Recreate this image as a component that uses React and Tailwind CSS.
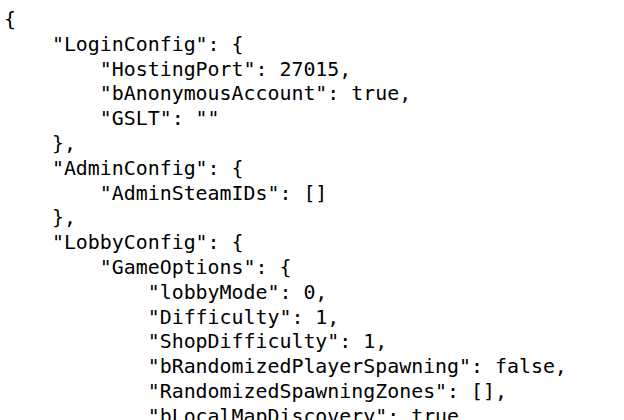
import React from "react";

const lines = [
  "{",
  '    "LoginConfig": {',
  '        "HostingPort": 27015,',
  '        "bAnonymousAccount": true,',
  '        "GSLT": ""',
  "    },",
  '    "AdminConfig": {',
  '        "AdminSteamIDs": []',
  "    },",
  '    "LobbyConfig": {',
  '        "GameOptions": {',
  '            "lobbyMode": 0,',
  '            "Difficulty": 1,',
  '            "ShopDifficulty": 1,',
  '            "bRandomizedPlayerSpawning": false,',
  '            "RandomizedSpawningZones": [],',
  '            "bLocalMapDiscovery": true,',
];

export default function App() {
  return (
    <div className="w-[624px] h-[420px] overflow-hidden bg-white">
      <pre className="pl-[4px] pt-[8px] font-['DejaVu_Sans_Mono',monospace] text-[19.9px] leading-[24.8px] text-black whitespace-pre">
        {lines.join("\n")}
      </pre>
    </div>
  );
}
